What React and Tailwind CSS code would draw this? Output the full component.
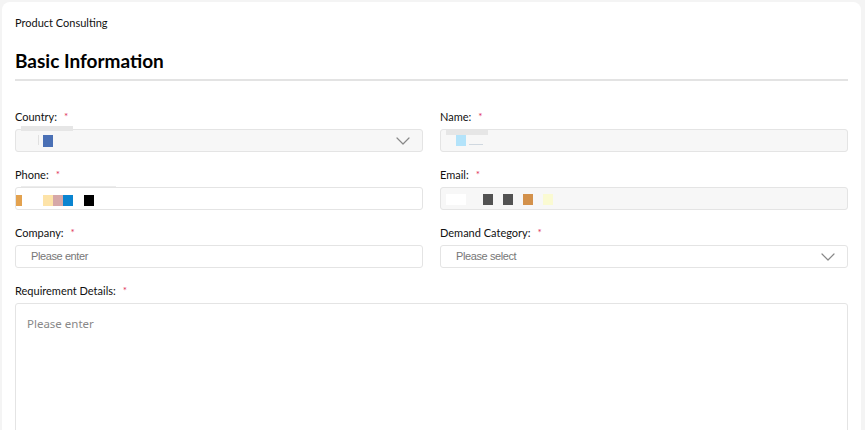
import React from 'react';

const font = { fontFamily: 'Lato, "Noto Sans", sans-serif' };
const arial = { fontFamily: '"Liberation Sans", Arial, sans-serif', letterSpacing: '-0.4px' };

function Label({ text }) {
  return (
    <div className="flex items-center h-[14px] text-[11px] text-[#111] leading-none">
      <span>{text}</span>
      <span className="ml-[7px] text-[#e0325a] text-[10px]">*</span>
    </div>
  );
}

function Chevron() {
  return (
    <svg width="14" height="8" viewBox="0 0 14 8" fill="none" className="shrink-0">
      <path d="M1 1l6 6 6-6" stroke="#888" strokeWidth="1.2" strokeLinecap="round" strokeLinejoin="round" />
    </svg>
  );
}

function Block({ c, w = 10, h = 11, ml = 0 }) {
  return <span className="block" style={{ background: c, width: w, height: h, marginLeft: ml }} />;
}

function Field({ label, disabled, children, right }) {
  return (
    <div className="flex flex-col">
      <Label text={label} />
      <div
        className={`mt-[6px] h-[23px] rounded-[3px] border border-[#e4e4e4] flex items-center relative ${
          disabled ? 'bg-[#f7f7f7]' : 'bg-white'
        }`}
      >
        <div className="flex items-center flex-1 h-full">{children}</div>
        {right && <div className="pr-[12px]">{right}</div>}
      </div>
    </div>
  );
}

export default function App() {
  return (
    <div className="w-[865px] h-[430px] overflow-hidden bg-[#f4f4f4] pt-[2px] pl-[2px] pr-[4px]" style={font}>
      <div className="bg-white rounded-t-[8px] h-full pl-[13px] pr-[13px]">
        <div className="pt-[14px] text-[11px] text-[#111] leading-[14px]">Product Consulting</div>
        <h1 className="mt-[19px] text-[19px] font-bold text-black leading-[24px]">Basic Information</h1>
        <div className="mt-[6px] h-[2px] bg-[#e3e3e3]" />

        <div className="mt-[28px] grid grid-cols-2 gap-x-[17px] gap-y-[15px]">
          <Field label="Country:" disabled right={<Chevron />}>
            <div className="relative h-full w-full">
              <span className="absolute left-[5px] top-[-4px] w-[52px] h-[5px] bg-[#e6e6e6]" />
              <span className="absolute left-[27px] top-[5px] w-[10px] h-[12px] bg-[#4a70b5]" />
              <span className="absolute left-[22px] top-[5px] w-[1px] h-[10px] bg-[#e0e0e0]" />
            </div>
          </Field>
          <Field label="Name:" disabled>
            <div className="relative h-full w-full">
              <span className="absolute left-[5px] top-[0px] w-[42px] h-[5px] bg-[#e6e6e6]" />
              <span className="absolute left-[15px] top-[5px] w-[10px] h-[11px] bg-[#b3e3fa]" />
              <span className="absolute left-[28px] top-[14px] w-[14px] h-[1px] bg-[#d0d8e0]" />
            </div>
          </Field>

          <Field label="Phone:">
            <div className="relative h-full w-full">
              <span className="absolute left-[5px] top-[-2px] w-[95px] h-[1px] bg-[#ececec]" />
              <div className="flex items-center pt-[7px]">
                <Block c="#e3a24f" w={6} />
                <Block c="#fde3a8" ml={21} />
                <Block c="#d6a8a8" />
                <Block c="#0a84d0" />
                <Block c="#000" ml={11} />
              </div>
            </div>
          </Field>
          <Field label="Email:" disabled>
            <div className="flex items-center pt-[1px]">
              <Block c="#ffffff" w={20} ml={5} />
              <Block c="#535353" ml={17} />
              <Block c="#535353" ml={10} />
              <Block c="#d3914b" ml={10} />
              <Block c="#fafad2" ml={10} />
            </div>
          </Field>

          <Field label="Company:">
            <span className="pl-[15px] text-[11px] text-[#777]" style={arial}>
              Please enter
            </span>
          </Field>
          <Field label="Demand Category:" right={<Chevron />}>
            <span className="pl-[15px] text-[11px] text-[#777]" style={arial}>
              Please select
            </span>
          </Field>
        </div>

        <div className="mt-[15px]">
          <Label text="Requirement Details:" />
          <div className="mt-[6px] h-[200px] rounded-[3px] border border-[#e4e4e4] px-[11px] pt-[11px] text-[11.5px] text-[#888]" style={{ fontFamily: '"Noto Sans", sans-serif' }}>
            Please enter
          </div>
        </div>
      </div>
    </div>
  );
}
